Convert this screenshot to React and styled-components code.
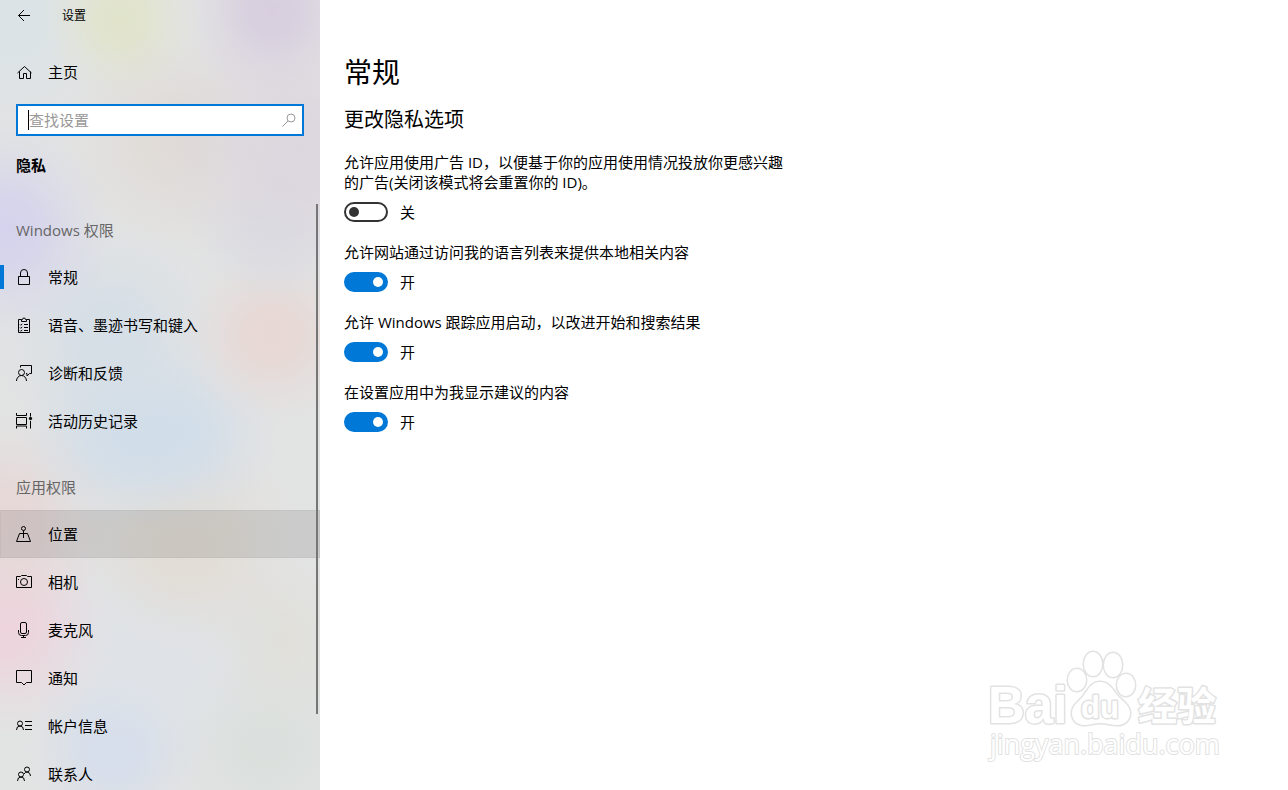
import { useState } from 'react';
import styled, { createGlobalStyle } from 'styled-components';

const GlobalStyle = createGlobalStyle`
  * {
    box-sizing: border-box;
  }

  body {
    margin: 0;
    background-color: #fff;
    color: #000;
    font-family: "Open Sans", "Noto Sans CJK SC", sans-serif;
    font-size: 15px;
    line-height: 20px;
  }
`;

// soft spot of colour on the acrylic sidebar, eased out so no edge shows
const spot = (x, y, r, rgb) => `radial-gradient(circle at ${x}px ${y}px,
  rgba(${rgb}, .9) 0, rgba(${rgb}, .75) ${r * 0.3}px, rgba(${rgb}, .35) ${r * 0.6}px,
  rgba(${rgb}, .1) ${r * 0.85}px, rgba(${rgb}, 0) ${r}px)`;

const acrylic = [
  spot(120, 20, 80, '225, 228, 200'),
  spot(272, 10, 90, '214, 203, 222'),
  spot(10, 20, 120, '218, 227, 231'),
  spot(300, 150, 150, '220, 213, 222'),
  spot(175, 140, 120, '224, 218, 213'),
  spot(5, 230, 110, '211, 209, 238'),
  spot(270, 230, 80, '217, 220, 226'),
  spot(272, 335, 90, '232, 214, 210'),
  spot(110, 335, 120, '212, 222, 231'),
  spot(120, 435, 100, '208, 221, 233'),
  spot(180, 435, 100, '208, 221, 234'),
  spot(5, 520, 110, '231, 214, 213'),
  spot(185, 545, 120, '227, 220, 211'),
  spot(5, 625, 110, '239, 210, 220'),
  spot(150, 640, 140, '222, 227, 233'),
  spot(275, 640, 90, '224, 223, 217'),
  spot(115, 745, 90, '211, 221, 238'),
  spot(265, 745, 110, '218, 224, 221'),
].join(', ');

const Page = styled.div`
  position: relative;
  display: flex;
  height: 100vh;
  overflow: hidden;
`;

const Sidebar = styled.aside`
  display: flex;
  flex-direction: column;
  flex: 0 0 320px;
  background-color: #e2e3e3;
  background-image: ${acrylic};
`;

const TitleBar = styled.header`
  display: flex;
  align-items: center;
  gap: 30px;
  height: 32px;
  padding: 0 16px;
  font-size: 12px;
`;

const BackButton = styled.button`
  display: flex;
  padding: 0;
  border: none;
  background: none;
  color: inherit;
`;

const Icon = styled.svg`
  flex: none;
  display: block;
  width: 16px;
  height: 16px;
  overflow: visible;
  fill: none;
  stroke: currentColor;
  stroke-width: 1;
`;

const HomeLink = styled.a`
  display: flex;
  align-items: center;
  gap: 16px;
  height: 48px;
  margin: 16px 0 8px;
  padding: 0 16px;
  color: inherit;
  text-decoration: none;
`;

const SearchBox = styled.label`
  display: flex;
  align-items: center;
  height: 32px;
  margin: 0 16px;
  padding: 0 5px 0 10px;
  border: 2px solid #0078d7;
  background-color: #fff;
  color: #999;
`;

const Caret = styled.span`
  width: 1px;
  height: 20px;
  background-color: #000;
`;

const SearchInput = styled.input`
  flex: 1;
  min-width: 0;
  height: 20px;
  padding: 0;
  border: none;
  outline: none;
  background: none;
  font: inherit;

  &::placeholder {
    color: #999;
    opacity: 1;
  }
`;

const Category = styled.h2`
  margin: 19px 16px 29px;
  font-size: 15px;
  font-weight: 700;
  line-height: 20px;
`;

const NavArea = styled.nav`
  position: relative;
  flex: 1;
  min-height: 0;
  overflow: hidden;
`;

const ScrollThumb = styled.div`
  position: absolute;
  top: 0;
  right: 2px;
  width: 2px;
  height: 87%;
  background-color: #767676;
`;

const GroupTitle = styled.h3`
  margin: 0;
  padding: ${props => props.$first ? '16px' : '32px'} 16px 13px;
  color: #666;
  font-size: 15px;
  font-weight: 400;
  line-height: 20px;
`;

const NavList = styled.ul`
  margin: 0;
  padding: 0;
  list-style: none;
`;

const NavLink = styled.a`
  display: flex;
  align-items: center;
  height: 48px;
  color: inherit;
  text-decoration: none;
  background-color: ${props => props.$hovered ? 'rgba(0, 0, 0, .1)' : 'transparent'};
  box-shadow: ${props => props.$hovered ? 'inset 0 0 0 1px rgba(0, 0, 0, .03)' : 'none'};
`;

const Marker = styled.span`
  width: 4px;
  height: 24px;
  margin-right: 12px;
  background-color: ${props => props.$active ? '#0078d7' : 'transparent'};
`;

const NavText = styled.span`
  margin-left: 16px;
`;

const Content = styled.main`
  flex: 1;
  min-width: 0;
  padding: 52px 24px 24px;
`;

const PageTitle = styled.h1`
  margin: 0 0 14px;
  font-size: 28px;
  font-weight: 400;
  line-height: 40px;
`;

const SectionTitle = styled.h2`
  margin: 0 0 18px;
  font-size: 20px;
  font-weight: 400;
  line-height: 28px;
`;

const Settings = styled.div`
  display: flex;
  flex-direction: column;
  gap: 20px;
  max-width: 448px;
`;

const Setting = styled.div`
  display: flex;
  flex-direction: column;
  gap: 10px;
`;

const SwitchRow = styled.div`
  display: flex;
  align-items: center;
  gap: 12px;
`;

const Switch = styled.input`
  appearance: none;
  width: 44px;
  height: 20px;
  margin: 0;
  padding: 3px;
  border: 2px solid #333;
  border-radius: 10px;

  &::before {
    content: "";
    display: block;
    width: 10px;
    height: 10px;
    border-radius: 50%;
    background-color: #333;
  }

  &:checked {
    border-color: #0078d7;
    background-color: #0078d7;
  }

  &:checked::before {
    margin-left: 24px;
    background-color: #fff;
  }
`;

const Watermark = styled.svg`
  position: absolute;
  right: 67px;
  bottom: 26px;
  width: 234px;
  height: 114px;
  overflow: visible;
  fill: #fff;
  stroke: #e2e2e2;
  stroke-width: 3;
  stroke-linejoin: round;
  paint-order: stroke;
  pointer-events: none;
`;

const icons = {
  back: <path d="M14 7.5H2.5M8 2 2.5 7.500 8 13" />,
  home: <path d="M1.5 9 8.5 2.5 15.5 9M3.5 7.5v7h4v-5h3v5h4v-7" />,
  search: (
    <>
      <circle cx="10" cy="6" r="4" />
      <path d="M7 9 1.5 14.5" />
    </>
  ),
  lock: <path d="M2.5 7.5h11v8h-11zM4.5 7.5V4a3.5 3.5 0 0 1 7 0v3.5" />,
  clipboard: (
    <>
      <path d="M5.5 2.5h-3v13h11v-13h-3M5.5 4.5v-2h1a1.5 1.5 0 0 1 3 0h1v2z" />
      <path d="M8 7.5h4M8 10.5h4M8 13.5h4M4 7.5l.8.8L6.3 6.8M4 10.5l.8.8L6.3 9.8M4 13.5l.8.8 1.5-1.5" />
    </>
  ),
  feedback: (
    <>
      <circle cx="5.5" cy="7.5" r="3" />
      <path d="M.5 16a5 5.5 0 0 1 10 0M4.5 2.5v-2h11v8h-2L11 11V8.5h-1" />
    </>
  ),
  history: (
    <>
      <path d="M.5 0v2.5h10V0M.5 15.5V13h10v2.5M.5 4.500h10v7H.5zM14.500 0v3.500M14.500 8v7.500" />
      <circle cx="14.5" cy="5.5" r="1.2" fill="currentColor" />
    </>
  ),
  location: (
    <>
      <circle cx="7.5" cy="2.500" r="2" />
      <path d="M7.500 4.500V12M3.500 7.500h8l3 8H.5z" />
    </>
  ),
  camera: (
    <>
      <path d="M.5 2.5h4l1-1h5l1 1h4v11H.5zM2 5.5h1" />
      <circle cx="8" cy="8" r="3.5" />
    </>
  ),
  mic: (
    <>
      <rect x="4.5" y=".5" width="6" height="11" rx="1.5" />
      <path d="M2.5 8v2.5a3 3 0 0 0 3 3h4a3 3 0 0 0 3-3V8M7.500 13.500v2M5 15.500h5" />
    </>
  ),
  message: <path d="M.5 .5h15v12h-5L8 15l-2.500-2.500h-5z" />,
  account: (
    <>
      <circle cx="4" cy="5.5" r="2.5" />
      <path d="M.5 12a3.500 4 0 0 1 7 0M9 3.500h7M9 7.500h7M9 11.500h7" />
    </>
  ),
  people: (
    <>
      <circle cx="11" cy="3.5" r="2.5" />
      <circle cx="5" cy="8.5" r="2.5" />
      <path d="M1.500 15a3.500 4 0 0 1 7 0M8 8a3.500 4 0 0 1 6.500 2" />
    </>
  ),
};

const windowsItems = [
  { icon: 'lock', text: '常规', active: true },
  { icon: 'clipboard', text: '语音、墨迹书写和键入' },
  { icon: 'feedback', text: '诊断和反馈' },
  { icon: 'history', text: '活动历史记录' },
];

const appItems = [
  { icon: 'location', text: '位置', hovered: true },
  { icon: 'camera', text: '相机' },
  { icon: 'mic', text: '麦克风' },
  { icon: 'message', text: '通知' },
  { icon: 'account', text: '帐户信息' },
  { icon: 'people', text: '联系人' },
];

const settings = [
  { id: 'ads', text: '允许应用使用广告 ID，以便基于你的应用使用情况投放你更感兴趣的广告(关闭该模式将会重置你的 ID)。', on: false },
  { id: 'language', text: '允许网站通过访问我的语言列表来提供本地相关内容', on: true },
  { id: 'launch', text: '允许 Windows 跟踪应用启动，以改进开始和搜索结果', on: true },
  { id: 'suggest', text: '在设置应用中为我显示建议的内容', on: true },
];

const Glyph = ({ name }) => (
  <Icon viewBox="0 0 16 16" aria-hidden="true">{icons[name]}</Icon>
);

const NavGroup = ({ items }) => (
  <NavList>
    {items.map(item => (
      <li key={item.text}>
        <NavLink href="#" $hovered={item.hovered}>
          <Marker $active={item.active} />
          <Glyph name={item.icon} />
          <NavText>{item.text}</NavText>
        </NavLink>
      </li>
    ))}
  </NavList>
);

const SettingSwitch = ({ id, text, on }) => {
  const [checked, setChecked] = useState(on);

  return (
    <Setting>
      <label htmlFor={id}>{text}</label>
      <SwitchRow>
        <Switch
          id={id}
          type="checkbox"
          role="switch"
          checked={checked}
          onChange={() => setChecked(!checked)}
        />
        <span>{checked ? '开' : '关'}</span>
      </SwitchRow>
    </Setting>
  );
};

const BaiduMark = () => (
  <Watermark viewBox="0 0 234 114" aria-hidden="true">
    <g fontFamily="Liberation Sans, sans-serif" fontWeight="700">
      <text x="1" y="73" fontSize="51">Bai</text>
      <ellipse cx="90" cy="30" rx="9" ry="11" />
      <ellipse cx="106" cy="14" rx="9" ry="12" />
      <ellipse cx="126" cy="15" rx="9" ry="12" />
      <ellipse cx="139" cy="35" rx="9" ry="11" />
      <path d="M113 32c8 0 12 6 17 13 5 6 13 10 13 18 0 8-6 12-13 12-6 0-11-2-17-2s-10 2-16 2c-7 0-12-5-12-12 0-8 8-12 12-18 5-7 8-13 16-13z" />
      <text x="94" y="68" fontSize="31">du</text>
    </g>
    <text x="151" y="70" fontSize="39" fontWeight="700" fontFamily="Noto Sans CJK SC, sans-serif">经验</text>
    <text x="3" y="104" fontSize="27" fontFamily="Open Sans, sans-serif" strokeWidth="2">jingyan.baidu.com</text>
  </Watermark>
);

const App = () => {
  return (
    <Page lang="zh-CN">
      <GlobalStyle />
      <Sidebar>
        <TitleBar>
          <BackButton type="button" aria-label="返回"><Glyph name="back" /></BackButton>
          <span>设置</span>
        </TitleBar>
        <HomeLink href="#">
          <Glyph name="home" />
          主页
        </HomeLink>
        <SearchBox>
          <Caret />
          <SearchInput type="text" placeholder="查找设置" aria-label="查找设置" />
          <Glyph name="search" />
        </SearchBox>
        <Category>隐私</Category>
        <NavArea>
          <GroupTitle $first>Windows 权限</GroupTitle>
          <NavGroup items={windowsItems} />
          <GroupTitle>应用权限</GroupTitle>
          <NavGroup items={appItems} />
          <ScrollThumb />
        </NavArea>
      </Sidebar>
      <Content>
        <PageTitle>常规</PageTitle>
        <SectionTitle>更改隐私选项</SectionTitle>
        <Settings>
          {settings.map(item => <SettingSwitch key={item.id} {...item} />)}
        </Settings>
      </Content>
      <BaiduMark />
    </Page>
  );
};

export default App;
